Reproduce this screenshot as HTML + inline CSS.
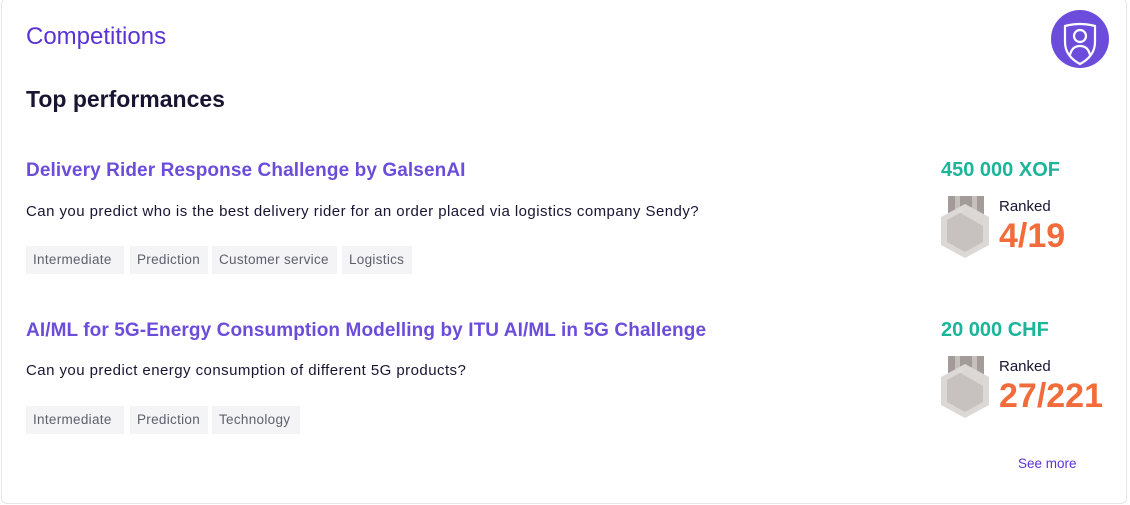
<!DOCTYPE html>
<html><head><meta charset="utf-8"><style>
*{margin:0;padding:0;box-sizing:border-box}
body{width:1130px;height:505px;background:#fff;font-family:"Liberation Sans",sans-serif;position:relative;overflow:hidden}
.card{position:absolute;left:1px;top:-2px;width:1126px;height:506px;border:1px solid #e6e6ea;border-radius:6px}
.a{position:absolute;white-space:nowrap}
.t{color:#6c4ddb;font-size:19px;font-weight:bold;letter-spacing:0.1px}
.d{color:#1a1433;font-size:15px;letter-spacing:0.45px}
.tag{position:absolute;height:28px;background:#f4f4f6;color:#5e5e6e;font-size:13.5px;line-height:28px;padding:0 7px;white-space:nowrap;letter-spacing:0.3px}
.p{color:#1bb59a;font-size:20px;font-weight:bold}
.r{color:#1a1433;font-size:15px}
.n{color:#f26b3a;font-size:34px;font-weight:bold}
</style></head><body>
<div class="card"></div>
<div class="a" style="left:26px;top:23px;color:#5b32d6;font-size:24px">Competitions</div>
<div class="a" style="left:26px;top:86px;color:#1a1433;font-size:23px;font-weight:bold">Top performances</div>
<svg class="a" style="left:1050px;top:9px" width="60" height="60" viewBox="0 0 60 60">
<circle cx="30" cy="30" r="29" fill="#6c4ddb"/>
<path d="M15 17 Q30 13 45 17 V33 Q45 47 30 55 Q15 47 15 33 Z" fill="none" stroke="#fff" stroke-width="2.2"/>
<circle cx="30" cy="27" r="6" fill="none" stroke="#fff" stroke-width="2.2"/>
<path d="M20 46 Q22 37 30 37 Q38 37 40 46" fill="none" stroke="#fff" stroke-width="2.2"/>
</svg>

<div class="a t" style="left:26px;top:160px">Delivery Rider Response Challenge by GalsenAI</div>
<div class="a d" style="left:26px;top:203px">Can you predict who is the best delivery rider for an order placed via logistics company Sendy?</div>
<div class="tag" style="left:26px;top:246px;width:98px">Intermediate</div>
<div class="tag" style="left:130px;top:246px;width:78px">Prediction</div>
<div class="tag" style="left:212px;top:246px;width:125px">Customer service</div>
<div class="tag" style="left:342px;top:246px;width:70px">Logistics</div>

<div class="a t" style="left:26px;top:320px">AI/ML for 5G-Energy Consumption Modelling by ITU AI/ML in 5G Challenge</div>
<div class="a d" style="left:26px;top:362px">Can you predict energy consumption of different 5G products?</div>
<div class="tag" style="left:26px;top:406px;width:98px">Intermediate</div>
<div class="tag" style="left:130px;top:406px;width:78px">Prediction</div>
<div class="tag" style="left:212px;top:406px;width:88px">Technology</div>

<div class="a p" style="left:941px;top:159px">450 000 XOF</div>
<div class="a r" style="left:999px;top:198px">Ranked</div>
<div class="a n" style="left:999px;top:217px">4/19</div>
<div class="a p" style="left:941px;top:319px">20 000 CHF</div>
<div class="a r" style="left:999px;top:358px">Ranked</div>
<div class="a n" style="left:999px;top:377px">27/221</div>

<svg class="a" style="left:940px;top:195px" width="52" height="65" viewBox="940 195 52 65">
<rect x="948" y="196" width="36" height="20" fill="#a39b98"/>
<rect x="955" y="196" width="5" height="20" fill="#c6c0bd"/><rect x="972" y="196" width="5" height="20" fill="#c6c0bd"/>
<polygon points="965,204 989,217 989,245 965,258 941,245 941,217" fill="#dcd8d6"/>
<polygon points="965,210 983,220 983,242 965,252 947,242 947,220" fill="#c7c2c0"/>
<polygon points="965,210 983,220 983,226 957,211" fill="#e2dfde" opacity="0.7"/>
</svg>
<svg class="a" style="left:940px;top:355px" width="52" height="65" viewBox="940 195 52 65">
<rect x="948" y="196" width="36" height="20" fill="#a39b98"/>
<rect x="955" y="196" width="5" height="20" fill="#c6c0bd"/><rect x="972" y="196" width="5" height="20" fill="#c6c0bd"/>
<polygon points="965,204 989,217 989,245 965,258 941,245 941,217" fill="#dcd8d6"/>
<polygon points="965,210 983,220 983,242 965,252 947,242 947,220" fill="#c7c2c0"/>
<polygon points="965,210 983,220 983,226 957,211" fill="#e2dfde" opacity="0.7"/>
</svg>
<div class="a" style="left:1018px;top:456px;color:#5b32d6;font-size:13.5px">See more</div>
</body></html>
